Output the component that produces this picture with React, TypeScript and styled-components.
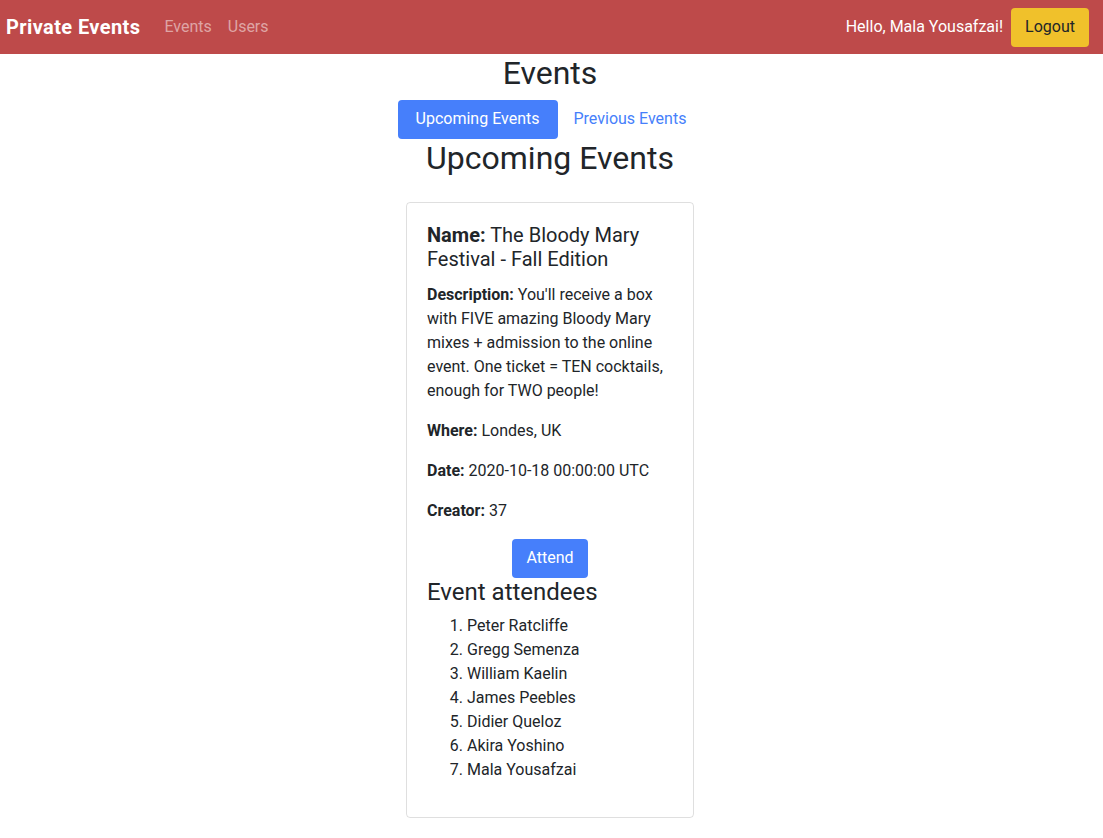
import React from "react";
import styled, { createGlobalStyle } from "styled-components";

const Global = createGlobalStyle`
  html, body { margin: 0; padding: 0; background: #fff; }
  body {
    font-family: Roboto, "Helvetica Neue", Arial, sans-serif;
    font-size: 16px;
    line-height: 1.5;
    color: #212529;
  }
  * { box-sizing: border-box; }
`;

const Navbar = styled.nav`
  display: flex;
  align-items: center;
  justify-content: space-between;
  height: 54px;
  padding: 0 14px 0 6px;
  background: #be4a4a;
`;

const NavLeft = styled.div`
  display: flex;
  align-items: center;
`;

const Brand = styled.a`
  font-size: 20px;
  font-weight: 700;
  letter-spacing: 0.4px;
  color: #fff;
  margin-right: 16px;
  text-decoration: none;
`;

const NavLink = styled.a`
  padding: 8px;
  color: #dea5a5;
  text-decoration: none;
`;

const NavRight = styled.div`
  display: flex;
  align-items: center;
  gap: 8px;
`;

const Greeting = styled.span`
  color: #fff;
`;

const Button = styled.button<{ $variant: "primary" | "warning" | "link"; $pad?: number }>`
  font-family: inherit;
  font-size: 16px;
  line-height: 24px;
  padding: 7px ${(p) => p.$pad ?? 13}px 8px;
  border: none;
  border-radius: 4px;
  cursor: pointer;
  background: ${(p) =>
    p.$variant === "primary" ? "#467ffb" : p.$variant === "warning" ? "#f0c12b" : "transparent"};
  color: ${(p) => (p.$variant === "primary" ? "#fff" : p.$variant === "warning" ? "#212529" : "#467ffb")};
`;

const Main = styled.main`
  display: flex;
  flex-direction: column;
  align-items: center;
  padding-right: 3px;
`;

const Heading = styled.h2`
  font-size: 32px;
  font-weight: 400;
  line-height: 1.2;
  margin: 0 0 8px;
`;

const Tabs = styled.div`
  display: flex;
`;

const Card = styled.div`
  width: 288px;
  margin-top: 16px;
  border: 1px solid rgba(0, 0, 0, 0.125);
  border-radius: 4px;
  padding: 20px;
  display: flex;
  flex-direction: column;
`;

const CardTitle = styled.h5`
  font-size: 20px;
  font-weight: 400;
  line-height: 1.2;
  margin: 0 0 12px;
`;

const Field = styled.p`
  margin: 0 0 16px;
`;

const AttendWrap = styled.div`
  display: flex;
  justify-content: center;
`;

const SubHeading = styled.h4`
  font-size: 24px;
  font-weight: 400;
  line-height: 1.2;
  margin: 0 0 7px;
`;

const List = styled.ol`
  margin: 0 0 15px;
  padding-left: 40px;
`;

const attendees = [
  "Peter Ratcliffe",
  "Gregg Semenza",
  "William Kaelin",
  "James Peebles",
  "Didier Queloz",
  "Akira Yoshino",
  "Mala Yousafzai",
];

export default function App() {
  return (
    <>
      <Global />
      <Navbar>
        <NavLeft>
          <Brand href="#">Private Events</Brand>
          <NavLink href="#">Events</NavLink>
          <NavLink href="#">Users</NavLink>
        </NavLeft>
        <NavRight>
          <Greeting>Hello, Mala Yousafzai!</Greeting>
          <Button $variant="warning" $pad={14}>Logout</Button>
        </NavRight>
      </Navbar>
      <Main>
        <Heading>Events</Heading>
        <Tabs>
          <Button $variant="primary" $pad={18}>Upcoming Events</Button>
          <Button $variant="link" $pad={16}>Previous Events</Button>
        </Tabs>
        <Heading>Upcoming Events</Heading>
        <Card>
          <CardTitle>
            <strong>Name:</strong> The Bloody Mary Festival - Fall Edition
          </CardTitle>
          <Field>
            <strong>Description:</strong> You'll receive a box with FIVE amazing Bloody Mary mixes + admission to
            the online event. One ticket = TEN cocktails, enough for TWO people!
          </Field>
          <Field>
            <strong>Where:</strong> Londes, UK
          </Field>
          <Field>
            <strong>Date:</strong> 2020-10-18 00:00:00 UTC
          </Field>
          <Field>
            <strong>Creator:</strong> 37
          </Field>
          <AttendWrap>
            <Button $variant="primary" $pad={14}>Attend</Button>
          </AttendWrap>
          <SubHeading>Event attendees</SubHeading>
          <List>
            {attendees.map((a) => (
              <li key={a}>{a}</li>
            ))}
          </List>
        </Card>
      </Main>
    </>
  );
}
